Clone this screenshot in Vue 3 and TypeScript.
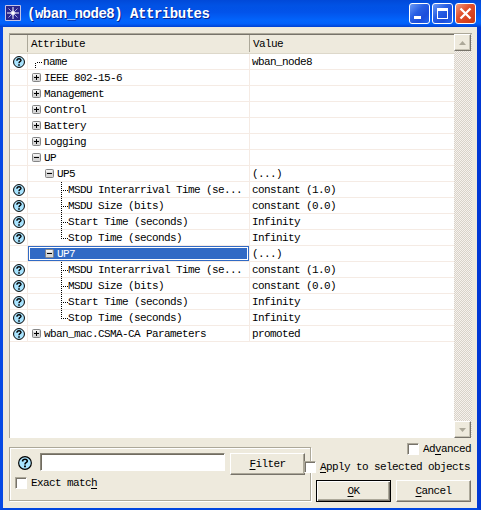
<script setup lang="ts">
import { defineComponent, h } from 'vue'

type Kind = 'first' | 'plus' | 'minus' | 'mid' | 'last'
interface Row { name: string; value?: string; kind: Kind; level: number; help?: boolean; selected?: boolean }

const parameters = (): Row[] => [
  { name: 'MSDU Interarrival Time (se...', value: 'constant (1.0)', kind: 'mid', level: 2, help: true },
  { name: 'MSDU Size (bits)', value: 'constant (0.0)', kind: 'mid', level: 2, help: true },
  { name: 'Start Time (seconds)', value: 'Infinity', kind: 'mid', level: 2, help: true },
  { name: 'Stop Time (seconds)', value: 'Infinity', kind: 'last', level: 2, help: true },
]

const rows: Row[] = [
  { name: 'name', value: 'wban_node8', kind: 'first', level: 0, help: true },
  { name: 'IEEE 802-15-6', kind: 'plus', level: 0 },
  { name: 'Management', kind: 'plus', level: 0 },
  { name: 'Control', kind: 'plus', level: 0 },
  { name: 'Battery', kind: 'plus', level: 0 },
  { name: 'Logging', kind: 'plus', level: 0 },
  { name: 'UP', kind: 'minus', level: 0 },
  { name: 'UP5', value: '(...)', kind: 'minus', level: 1 },
  ...parameters(),
  { name: 'UP7', value: '(...)', kind: 'minus', level: 1, selected: true },
  ...parameters(),
  { name: 'wban_mac.CSMA-CA Parameters', value: 'promoted', kind: 'plus', level: 0, help: true },
]

const HelpIcon = defineComponent({
  props: { size: { type: Number, default: 12 } },
  setup: (p) => () =>
    h('svg', { width: p.size, height: p.size, viewBox: '0 0 12 12' }, [
      h('circle', { cx: 6, cy: 6, r: 5.45, fill: '#a9e4ff', stroke: '#000', 'stroke-width': 1 }),
      h('path', { d: 'M4 4.8V3.9Q4.3 2.8 6 2.8T8 4.2Q8 5 6.9 5.7Q6 6.3 6 7.3', fill: 'none', stroke: '#000', 'stroke-width': 1.4 }),
      h('path', { d: 'M5.2 8.2h1.6v1.5H5.2z', fill: '#000' }),
    ]),
})
</script>

<template>
  <div class="window">
    <header class="titlebar">
      <svg class="logo" width="16" height="16" viewBox="0 0 16 16">
        <path fill="#29248c" stroke="#c5c4e6" d="M.5.5h15v15H.5z" />
        <path stroke="#aaa6dc" d="M3.5 3.5l9 9M12.5 3.5l-9 9" />
        <path stroke="#fff" d="M8 2v12M2 8h12" />
        <path fill="#fff" d="M8 5l1 2 2 1-2 1-1 2-1-2-2-1 2-1z" />
      </svg>
      <h1>(wban_node8) Attributes</h1>
      <div class="controls">
        <span class="control">
          <svg width="19" height="19" viewBox="0 0 19 19"><path fill="#fff" d="M4 12h7v3H4z" /></svg>
        </span>
        <span class="control">
          <svg width="19" height="19" viewBox="0 0 19 19"><path fill="#fff" fill-rule="evenodd" d="M4 4h11v11H4zM5 7v7h9V7z" /></svg>
        </span>
        <span class="control close">
          <svg width="19" height="19" viewBox="0 0 19 19"><path stroke="#fff" stroke-width="2.3" d="M4.5 4.5l10 10M14.5 4.5l-10 10" /></svg>
        </span>
      </div>
    </header>

    <main class="list">
      <div class="table">
        <div class="row head">
          <span class="cell help"></span>
          <span class="cell attr">Attribute</span>
          <span class="cell value">Value</span>
        </div>
        <div v-for="(row, i) in rows" :key="i" class="row">
          <span class="cell help"><HelpIcon v-if="row.help" /></span>
          <span class="cell attr" :class="['level' + row.level, { selected: row.selected }]">
            <svg v-if="row.kind === 'plus' || row.kind === 'minus'" class="toggle" width="9" height="9" viewBox="0 0 9 9">
              <rect x=".5" y=".5" width="8" height="8" rx="1" fill="#d5d5d5" stroke="#858585" />
              <path fill="#f1f1f1" d="M1 1h6v2H1z" />
              <path stroke="#000" d="M2 4.5h5" />
              <path v-if="row.kind === 'plus'" stroke="#000" d="M4.5 2v5" />
            </svg>
            <svg v-else class="branch" width="7" height="16" viewBox="0 0 7 16">
              <path v-if="row.kind === 'first'" stroke="#000" stroke-dasharray="1 1" d="M.5 9v5" />
              <path v-else-if="row.kind === 'mid'" stroke="#000" stroke-dasharray="1 1" d="M.5 0v16" />
              <path v-else stroke="#000" stroke-dasharray="1 1" d="M.5 0v9" />
              <path stroke="#000" stroke-dasharray="1 1" d="M2 8.5h5" />
            </svg>
            <span class="label">{{ row.name }}</span>
          </span>
          <span class="cell value">{{ row.value }}</span>
        </div>
      </div>
      <div class="scrollbar">
        <span class="arrow"><svg width="7" height="4" viewBox="0 0 7 4"><path fill="#aca899" d="M0 4h7L3.5 0z" /></svg></span>
        <span class="arrow"><svg width="7" height="4" viewBox="0 0 7 4"><path fill="#aca899" d="M0 0h7L3.5 4z" /></svg></span>
      </div>
    </main>

    <footer class="footer">
      <section class="filter">
        <div class="search">
          <HelpIcon :size="14" />
          <input class="field" type="text" />
          <button class="button"><u>F</u>ilter</button>
        </div>
        <label class="check exact"><i class="box"></i><span>Exact matc<u>h</u></span></label>
      </section>
      <section class="actions">
        <label class="check advanced"><i class="box"></i><span>Ad<u>v</u>anced</span></label>
        <label class="check apply"><i class="box"></i><span><u>A</u>pply to selected objects</span></label>
        <div class="buttons">
          <button class="button default"><u>O</u>K</button>
          <button class="button"><u>C</u>ancel</button>
        </div>
      </section>
    </footer>
  </div>
</template>

<style>
body { overflow: hidden; }
</style>

<style scoped>
.window {
  box-sizing: border-box;
  width: 481px;
  height: 510px;
  display: flex;
  flex-direction: column;
  background: #eeeadd;
  border: solid #0046e0;
  border-width: 0 4px 2px 3px;
  border-left-color: #0649e4;
  border-right-color: #0038d4;
  color: #000;
  font: 11px/16px "Liberation Mono", monospace;
  letter-spacing: -0.6px;
  white-space: pre;
}
.titlebar {
  box-sizing: border-box;
  height: 27px;
  flex: none;
  display: flex;
  align-items: center;
  margin: 0 -4px 0 -3px;
  padding: 0 5px;
  background: linear-gradient(#0149d8, #0152e4 20%, #0253ea 45%, #0264fc 75%, #0160fa 88%, #0140d0);
}
.logo { margin-bottom: 1px; }
h1 {
  flex: 1;
  margin: 0 0 0 6px;
  color: #fff;
  font: bold 14px/20px "Liberation Mono", monospace;
  letter-spacing: -0.47px;
  text-shadow: 1px 1px #072390;
}
.controls { display: flex; gap: 2px; }
.control {
  width: 19px;
  height: 19px;
  border: 1px solid #fff;
  border-radius: 3px;
  background: linear-gradient(135deg, #6d9bf6, #285fe4 40%, #1c4ddb 70%, #2265ee);
}
.control svg { display: block; }
.control.close { background: linear-gradient(135deg, #f19b80, #e1512e 40%, #d6401c 75%, #c83a12); }
.list {
  box-sizing: border-box;
  width: 463px;
  height: 405px;
  flex: none;
  display: flex;
  margin: 6px 0 0 6px;
  border: solid #aca899;
  border-width: 1px 0 0 1px;
  background: #fff;
}
.table { width: 444px; }
.row {
  box-sizing: border-box;
  height: 16px;
  display: grid;
  grid-template-columns: 17px 222px 1fr;
  border-bottom: 1px solid #f5ebe4;
}
.row.head {
  height: 20px;
  background: #eeeadd;
  border-top: 1px solid #77736a;
  border-bottom: 1px solid #ddd8ca;
}
.cell { box-sizing: border-box; display: flex; align-items: center; height: 15px; min-width: 0; }
.cell + .cell { border-left: 1px solid #f5ebe4; }
.help { align-items: flex-start; padding: 2px 0 0 3px; }
.head .cell { height: 17px; }
.head .cell + .cell { border-color: #aca899; }
.head .attr, .head .value { padding-left: 3px; }
.attr { padding-left: 4px; }
.level1 { padding-left: 17px; }
.level2 { padding-left: 33px; }
.value { padding-left: 2px; }
.toggle { flex: none; margin-right: 3px; }
.branch { flex: none; align-self: flex-start; }
.level0 .branch { margin: 0 1px 0 3px; }
.selected {
  background: #316ac5;
  color: #fff;
  box-shadow: inset 0 0 0 1px #316ac5, inset 0 0 0 2px #fff;
}
.scrollbar {
  width: 18px;
  display: flex;
  flex-direction: column;
  justify-content: space-between;
  background: repeating-conic-gradient(#d8d3ca 0 25%, #f7f2ed 0 50%) 0 0 / 2px 2px;
}
.arrow {
  box-sizing: border-box;
  width: 17px;
  height: 17px;
  display: flex;
  align-items: center;
  justify-content: center;
  background: #eeeadd;
  border: 1px solid;
  border-color: #fff #77736a #77736a #fff;
  box-shadow: inset -1px -1px #c5c1b2;
}
.footer { flex: 1; display: flex; padding-left: 6px; }
.filter {
  box-sizing: border-box;
  width: 302px;
  height: 54px;
  margin-top: 9px;
  padding: 5px 0 0 5px;
  border: 1px solid #aca899;
  box-shadow: inset 1px 1px #fff, 1px 1px #fff;
}
.search { display: flex; align-items: flex-start; padding-left: 3px; }
.search svg { margin: 3px 8px 0 0; }
.field {
  box-sizing: border-box;
  width: 185px;
  height: 18px;
  margin: 0 5px 0 0;
  padding: 0 2px;
  border: 1px solid;
  border-color: #8c887b #fff #fff #8c887b;
  box-shadow: inset 1px 1px #716c60;
  background: #fff;
  outline: none;
}
.button {
  box-sizing: border-box;
  width: 75px;
  height: 22px;
  padding: 0;
  border: 1px solid;
  border-color: #fff #77736a #77736a #fff;
  box-shadow: inset -1px -1px #aca899;
  background: #eeeadd;
  color: #000;
  font: inherit;
  letter-spacing: inherit;
}
.default { border-color: #000; box-shadow: inset 1px 1px #fff, inset -1px -1px #77736a, inset -2px -2px #aca899; }
u { text-decoration: underline; text-underline-offset: 2px; }
.check { display: flex; align-items: center; height: 14px; line-height: 14px; }
.box {
  box-sizing: border-box;
  width: 12px;
  height: 12px;
  flex: none;
  margin-right: 4px;
  border: 1px solid;
  border-color: #aca899 #fff #fff #aca899;
  box-shadow: inset 1px 1px #77736a;
  background: #fff;
}
.exact { margin-top: 1px; }
.actions { display: flex; flex-direction: column; width: 161px; }
.advanced { align-self: flex-end; margin: 4px 1px 0 0; }
.apply { margin: 4px 0 0 -7px; }
.buttons { display: flex; gap: 5px; margin: 6px 0 0 5px; }
</style>
